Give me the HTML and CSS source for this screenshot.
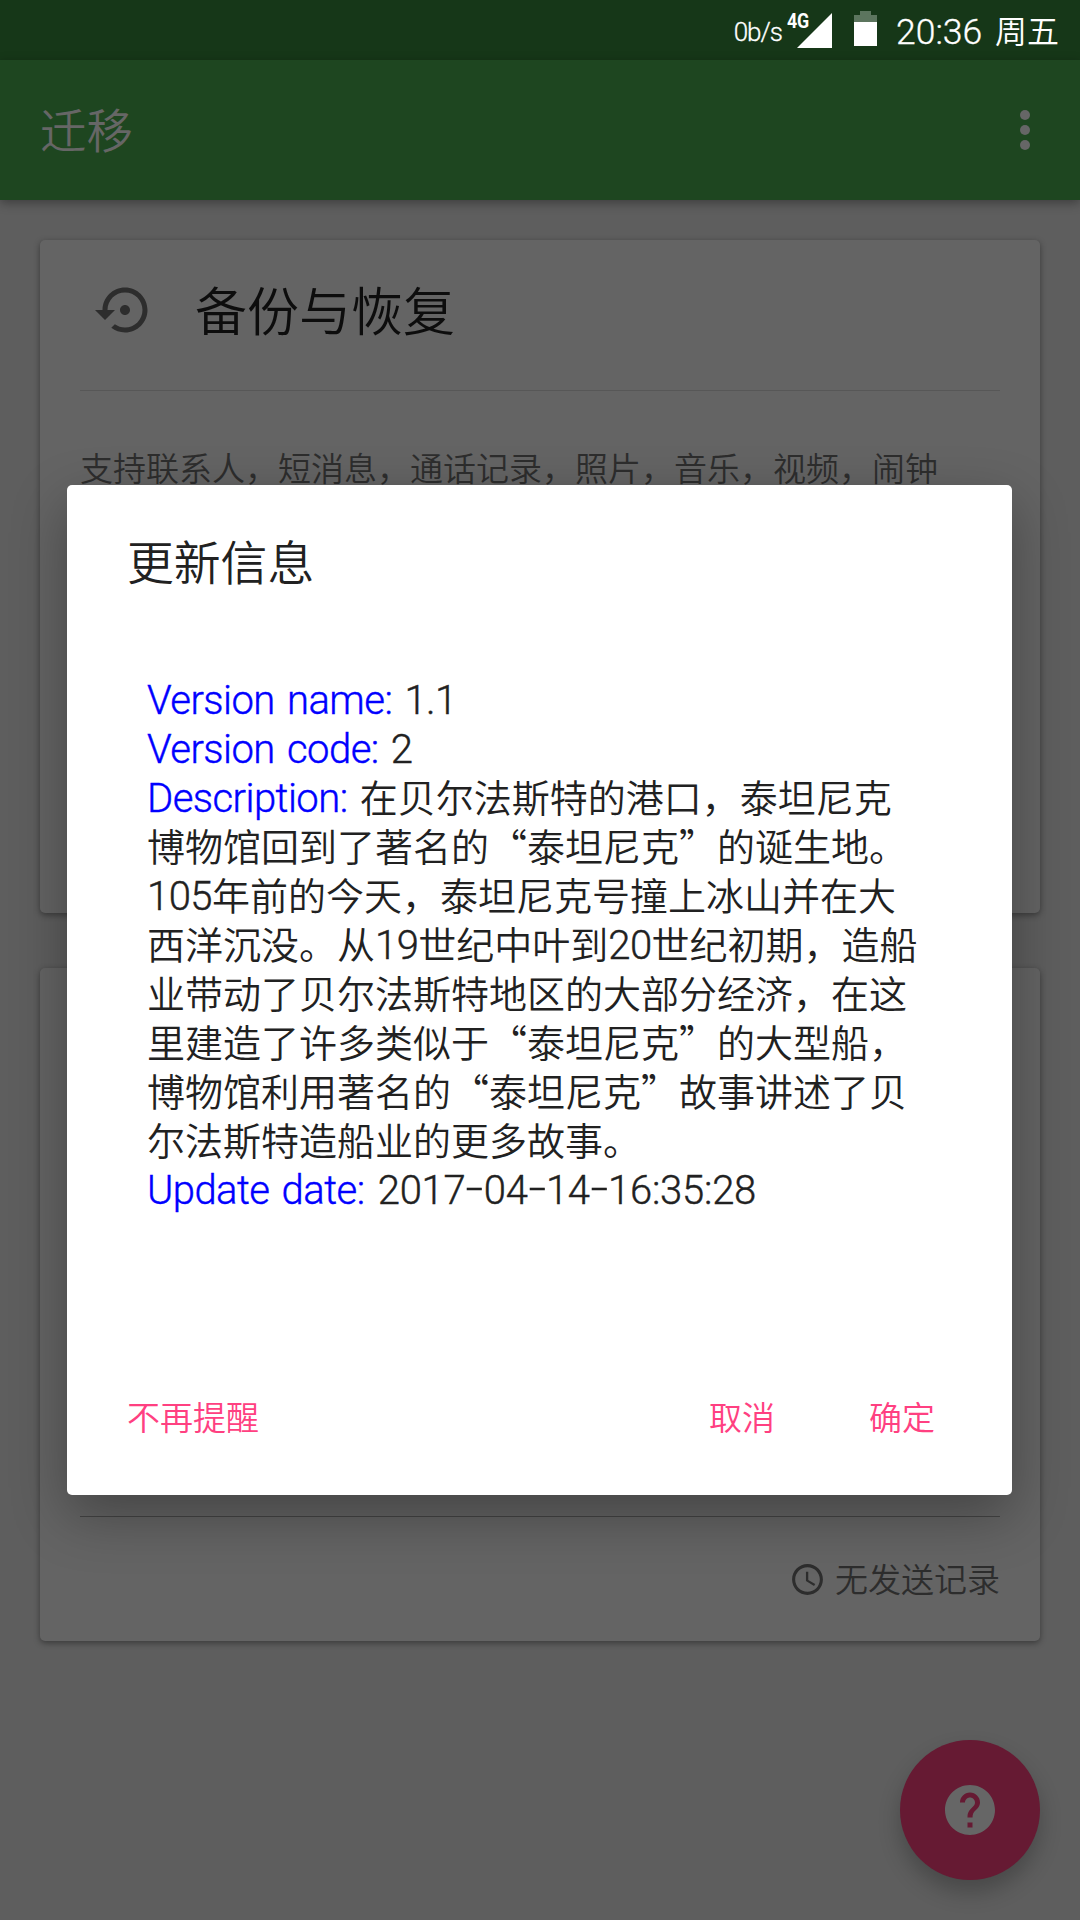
FILE: index.html
```html
<!DOCTYPE html>
<html lang="zh-CN">
<head>
<meta charset="utf-8">
<title>迁移</title>
<link rel="stylesheet" href="styles.css">
</head>
<body>
<div class="screen">
  <header class="status">
    <span class="speed">0b/s</span>
    <span class="network">4G</span>
    <svg class="signal" viewBox="0 0 35 35"><path d="M35 0v35H0z"/></svg>
    <svg class="battery" viewBox="0 0 23 35"><path class="battery-empty" d="M6 0h11v4h6v7H0V4h6z"/><path d="M0 11h23v24H0z"/></svg>
    <span class="clock"><span class="time">20:36</span><span class="day">周五</span></span>
  </header>
  <nav class="appbar">
    <h1 class="appbar-title">迁移</h1>
    <svg class="more" viewBox="0 0 24 24"><circle cx="12" cy="6" r="2"/><circle cx="12" cy="12" r="2"/><circle cx="12" cy="18" r="2"/></svg>
  </nav>
  <main class="content">
    <section class="card">
      <div class="card-head">
        <svg class="restore" viewBox="0 0 24 24"><path d="M14 12c0-1.1-.9-2-2-2s-2 .9-2 2 .9 2 2 2 2-.9 2-2zm-2-9c-4.97 0-9 4.03-9 9H0l4 4 4-4H5c0-3.87 3.13-7 7-7s7 3.13 7 7-3.13 7-7 7c-1.51 0-2.91-.49-4.06-1.3l-1.42 1.44C8.04 20.3 9.94 21 12 21c4.97 0 9-4.03 9-9s-4.03-9-9-9z"/></svg>
        <h2 class="card-title">备份与恢复</h2>
      </div>
      <p class="card-text">支持联系人，短消息，通话记录，照片，音乐，视频，闹钟</p>
    </section>
    <section class="card card-send">
      <div class="card-foot">
        <svg class="history" viewBox="0 0 24 24"><path d="M11.99 2C6.47 2 2 6.48 2 12s4.47 10 9.99 10C17.52 22 22 17.52 22 12S17.52 2 11.99 2zM12 20c-4.42 0-8-3.58-8-8s3.58-8 8-8 8 3.58 8 8-3.58 8-8 8zm.5-13H11v6l5.25 3.15.75-1.23-4.5-2.67z"/></svg>
        <span>无发送记录</span>
      </div>
    </section>
  </main>
  <div class="fab">
    <svg class="help" viewBox="0 0 24 24"><path d="M12 2C6.48 2 2 6.48 2 12s4.48 10 10 10 10-4.48 10-10S17.52 2 12 2zm1 17h-2v-2h2v2zm2.07-7.75l-.9.92C13.45 12.9 13 13.5 13 15h-2v-.5c0-1.1.45-2.1 1.17-2.83l1.24-1.26c.37-.36.59-.86.59-1.41 0-1.1-.9-2-2-2s-2 .9-2 2H8c0-2.21 1.79-4 4-4s4 1.79 4 4c0 .88-.36 1.68-.93 2.25z"/></svg>
  </div>
  <div class="dialog">
    <h2 class="dialog-title">更新信息</h2>
    <div class="info">
      <div class="line"><span class="latin"><span class="key">Version name:</span> 1.1</span></div>
      <div class="line"><span class="latin"><span class="key">Version code:</span> 2</span></div>
      <div class="line"><span class="latin"><span class="key">Description:</span> </span>在贝尔法斯特的港口，泰坦尼克</div>
      <div class="line">博物馆回到了著名的“泰坦尼克”的诞生地。</div>
      <div class="line"><span class="latin">105</span>年前的今天，泰坦尼克号撞上冰山并在大</div>
      <div class="line">西洋沉没。从<span class="latin">19</span>世纪中叶到<span class="latin">20</span>世纪初期，造船</div>
      <div class="line">业带动了贝尔法斯特地区的大部分经济，在这</div>
      <div class="line">里建造了许多类似于“泰坦尼克”的大型船，</div>
      <div class="line">博物馆利用著名的“泰坦尼克”故事讲述了贝</div>
      <div class="line">尔法斯特造船业的更多故事。</div>
      <div class="line"><span class="latin"><span class="key">Update date:</span> <span class="date">2017<i class="dash">-</i>04<i class="dash">-</i>14<i class="dash">-</i>16:35:28</span></span></div>
    </div>
    <div class="actions">
      <span class="action never">不再提醒</span>
      <span class="action">取消</span>
      <span class="action">确定</span>
    </div>
  </div>
</div>
</body>
</html>
```
FILE: styles.css
```css
* { box-sizing: border-box; margin: 0; padding: 0; }
body {
  width: 1080px;
  height: 1920px;
  overflow: hidden;
  font-family: "Noto Sans CJK SC", sans-serif;
  font-weight: 350;
}
svg { display: block; flex: none; }
.screen {
  position: relative;
  height: 1920px;
  background: #5e5e5e;
  display: flex;
  flex-direction: column;
}
.status {
  height: 60px;
  flex: none;
  background: #163718;
  color: #fff;
  fill: #fff;
  display: flex;
  padding: 0 21px 0 0;
  justify-content: flex-end;
  align-items: flex-start;
  white-space: nowrap;
}
.speed { font: 300 26px/30px Roboto, sans-serif; letter-spacing: -1px; margin: 17px 6px 0 0; -webkit-text-stroke: .3px; }
.network {
  width: 26px;
  font: 700 21px/21px Roboto, sans-serif;
  letter-spacing: -.3px;
  margin: 11px -12px 0 -5px;
  transform: scaleX(.85);
  transform-origin: right;
}
.signal { width: 35px; height: 35px; margin: 13px 22px 0 0; }
.battery { width: 23px; height: 35px; margin: 11px 20px 0 0; }
.battery-empty { fill: #5c755e; }
.clock { display: flex; align-items: center; justify-content: space-between; width: 163px; height: 60px; margin: 2px 0 0 -1px; }
.time { font: 300 35.5px/60px Roboto, sans-serif; -webkit-text-stroke: .3px; }
.day { font-size: 32px; line-height: 60px; margin-top: -6px; }
.appbar {
  position: relative;
  height: 140px;
  flex: none;
  background: #1e4620;
  display: flex;
  align-items: center;
  justify-content: space-between;
  padding: 0 25px 0 40px;
  box-shadow: 0 3px 10px rgba(0, 0, 0, .35);
}
.appbar-title { font-size: 46.5px; line-height: 60px; font-weight: 350; color: #666; margin-top: -4px; }
.more { width: 60px; height: 60px; fill: #666; }
.content { padding: 40px; display: flex; flex-direction: column; gap: 55px; }
.card {
  height: 673px;
  padding: 0 40px;
  border-radius: 5px;
  background: #646464;
  box-shadow: 0 2px 6px rgba(0, 0, 0, .4);
}
.card-head {
  height: 151px;
  border-bottom: 1px solid #575757;
  display: flex;
  align-items: center;
  gap: 40px;
  padding: 0 0 10px 15px;
}
.restore { width: 60px; height: 60px; fill: #2d2d2d; }
.card-title { font-size: 52px; line-height: 70px; font-weight: 350; color: #0d0d0d; margin-top: -3px; }
.card-text { font-size: 33px; line-height: 46px; color: #2d2d2d; margin-top: 53px; white-space: nowrap; }
.card-send { display: flex; flex-direction: column; justify-content: flex-end; }
.card-foot {
  height: 125px;
  border-top: 1px solid #444;
  display: flex;
  align-items: center;
  justify-content: flex-end;
  gap: 9px;
  font-size: 33px;
  line-height: 46px;
  color: #2d2d2d;
}
.card-foot span { margin-top: -2px; }
.history { width: 37px; height: 37px; fill: #2d2d2d; }
.fab {
  position: absolute;
  left: 900px;
  top: 1740px;
  width: 140px;
  height: 140px;
  border-radius: 50%;
  background: #661a33;
  box-shadow: 0 12px 22px rgba(0, 0, 0, .24);
  display: flex;
  align-items: center;
  justify-content: center;
}
.help { width: 60px; height: 60px; fill: #666; }
.dialog {
  position: absolute;
  left: 67px;
  top: 485px;
  width: 945px;
  height: 1010px;
  border-radius: 5px;
  background: #fff;
  box-shadow: 0 20px 56px rgba(0, 0, 0, .32);
  color: #212121;
  display: flex;
  flex-direction: column;
  padding: 45px 77px 0 60px;
}
.dialog-title { font-size: 46.8px; line-height: 60px; font-weight: 350; }
.info { margin: 83px 0 0 20px; font-size: 38px; }
.line { height: 49px; line-height: 49px; white-space: pre; }
.latin { font-family: Roboto, sans-serif; font-weight: 300; font-size: 40px; letter-spacing: -.55px; word-spacing: 3px; -webkit-text-stroke: .4px; }
.key { color: #00f; }
.date { letter-spacing: -.25px; margin-left: 1px; }
.dash { display: inline-block; width: 18.3px; text-align: center; font-style: normal; transform: translateY(-2px) scaleX(1.55); }
.actions { display: flex; gap: 94px; margin-top: 179px; }
.action { font-size: 33px; line-height: 50px; color: #ff4081; }
.never { margin-right: auto; }
```
